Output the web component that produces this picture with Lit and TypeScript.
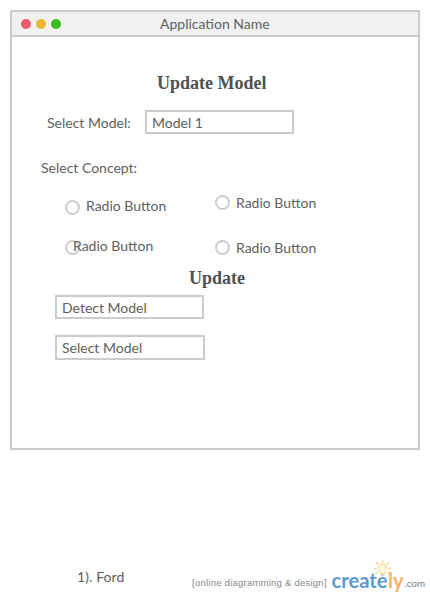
import { LitElement, html, css } from "lit";
import { customElement, property } from "lit/decorators.js";

@customElement("radio-option")
class RadioOption extends LitElement {
  @property() label = "Radio Button";
  static styles = css`
    :host { display: flex; height: 20px; align-items: flex-start; }
    .ring { box-sizing: border-box; flex: none; width: 15px; height: 15px; margin-top: var(--ring-top, 4px); border: 2px solid #ccc; border-radius: 50%; }
    .label { margin-left: var(--label-gap, 6px); line-height: 20px; white-space: nowrap; position: relative; }
  `;
  render() {
    return html`<span class="ring"></span><span class="label">${this.label}</span>`;
  }
}

@customElement("creately-logo")
class CreatelyLogo extends LitElement {
  static styles = css`
    :host { display: block; flex: none; width: 98px; height: 41px; }
    svg { display: block; }
    .word { font: 700 20px Lato, sans-serif; }
    .com { font: 9.5px "Liberation Sans", sans-serif; }
  `;
  render() {
    return html`<svg width="98" height="41" viewBox="0 0 98 41">
      <g stroke="#f8cf85" stroke-width="1.4" stroke-linecap="round">
        <path d="M50.500 3.500v1.500M44.500 6l1.200 1.300M56.500 6l-1.200 1.300M42.500 11.500h1.500M57 11.500h1.500M44 16.500l1-.8M57.500 16.500l-1-.8" />
      </g>
      <path d="M48.500 16.500c0-2-2-3-2-5.500a4 4 0 0 1 8 0c0 2.500-2 3.500-2 5.500z" fill="#fffbe2" stroke="#f8d488" />
      <path d="M48.500 18h4" stroke="#aaa" />
      <text class="word" x="-.5" y="30.500" fill="#5b9bd0" textLength="56" lengthAdjust="spacingAndGlyphs">create</text>
      <text class="word" x="56" y="30.500" fill="#f8b266" textLength="15.500" lengthAdjust="spacingAndGlyphs">ly</text>
      <text class="com" x="72" y="30" fill="#777" textLength="21" lengthAdjust="spacingAndGlyphs">.com</text>
    </svg>`;
  }
}

@customElement("app-root")
class AppRoot extends LitElement {
  static styles = css`
    :host { display: flex; flex-direction: column; box-sizing: border-box; width: 430px; height: 598px; padding: 10px 0 0 10px; overflow: hidden; background: #fff; color: #606060; font: 14px/20px Lato, sans-serif; }
    .window { box-sizing: border-box; width: 410px; height: 440px; border: 2px solid #ccc; }
    .bar { display: grid; grid-template-columns: 148px 1fr; align-items: center; height: 23px; background: #f1f1f1; border-bottom: 2px solid #ccc; }
    .dots { display: flex; gap: 5px; padding-left: 9px; }
    .dot { width: 10px; height: 10px; border-radius: 50%; }
    .red { background: #ea5d68; }
    .amber { background: #ecb731; }
    .green { background: #3bbb1c; }
    .title { white-space: nowrap; }
    h1, h2 { margin: 0; font: 700 18px/24px "Liberation Serif", serif; color: #505050; }
    h1 { margin: 34px 0 0 145px; }
    h2 { margin: 8px 0 0 177px; }
    .model { display: flex; align-items: center; margin: 15px 0 0 35px; }
    .model .name { width: 98px; padding-top: 2px; }
    .field { box-sizing: border-box; width: 149px; height: 24px; padding-left: 5px; border: 2px solid #ccc; line-height: 21px; }
    .concept { margin: 24px 0 0 29px; }
    .radios { display: grid; grid-template-columns: 150px 150px; margin: 15px 0 0 53px; }
    .column { display: flex; flex-direction: column; gap: 20px; padding-top: 3px; }
    .column.right { gap: 25px; padding-top: 0; }
    .right radio-option { --ring-top: 2px; }
    .tight { --label-gap: -7px; }
    .detect { margin: 5px 0 0 43px; }
    .select { width: 150px; margin: 16px 0 0 43px; height: 25px; }
    .footer { display: flex; align-items: flex-start; margin-top: 107px; }
    .answer { flex: none; width: 115px; margin: 10px 0 0 67px; white-space: nowrap; letter-spacing: 0.1px; }
    .tagline { flex: none; width: 140px; margin-top: 16px; font: 9.5px/20px "Liberation Sans", sans-serif; letter-spacing: 0.24px; color: #888; white-space: nowrap; }
  `;
  render() {
    return html`
      <section class="window">
        <header class="bar">
          <div class="dots"><span class="dot red"></span><span class="dot amber"></span><span class="dot green"></span></div>
          <span class="title">Application Name</span>
        </header>
        <h1>Update Model</h1>
        <div class="model"><span class="name">Select Model:</span><div class="field">Model 1</div></div>
        <div class="concept">Select Concept:</div>
        <div class="radios">
          <div class="column"><radio-option></radio-option><radio-option class="tight"></radio-option></div>
          <div class="column right"><radio-option></radio-option><radio-option></radio-option></div>
        </div>
        <h2>Update</h2>
        <div class="field detect">Detect Model</div>
        <div class="field select">Select Model</div>
      </section>
      <footer class="footer">
        <span class="answer">1). Ford</span>
        <span class="tagline">[online diagramming &amp; design]</span>
        <creately-logo></creately-logo>
      </footer>
    `;
  }
}
